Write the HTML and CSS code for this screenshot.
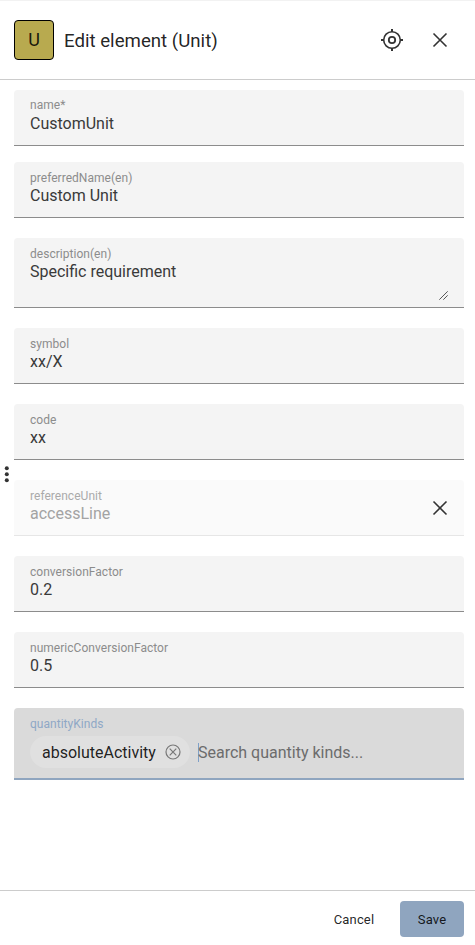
FILE: index.html
```html
<!DOCTYPE html>
<html lang="en">
<head>
<meta charset="utf-8">
<title>Edit element</title>
<link rel="stylesheet" href="styles.css">
</head>
<body>
<div class="panel">
  <header class="header">
    <div class="badge">U</div>
    <h1 class="title">Edit element (Unit)</h1>
    <button class="icon-button" aria-label="Locate">
      <svg width="24" height="24" viewBox="0 0 24 24" fill="none" stroke="currentColor"><circle cx="12" cy="12" r="8.3" stroke-width="1.6"/><circle cx="12" cy="12" r="3.2" stroke-width="1.8"/><path d="M12 1v3M12 20v3M1 12h3M20 12h3" stroke-width="2"/></svg>
    </button>
    <button class="icon-button" aria-label="Close">
      <svg width="24" height="24" viewBox="0 0 24 24" fill="none" stroke="currentColor" stroke-width="1.6"><path d="M5.5 5.5l13 13M18.5 5.5l-13 13"/></svg>
    </button>
  </header>
  <main class="form">
    <div class="field field-first"><span class="label">name*</span><span class="value">CustomUnit</span></div>
    <div class="field"><span class="label">preferredName(en)</span><span class="value">Custom Unit</span></div>
    <div class="field field-area"><span class="label">description(en)</span><span class="value">Specific requirement</span>
      <svg class="grip" width="9" height="9" viewBox="0 0 9 9" fill="none" stroke="currentColor" stroke-width=".9"><path d="M.3 8.7L8.7.3M4.3 8.7l4.4-4.4"/></svg>
    </div>
    <div class="field"><span class="label">symbol</span><span class="value">xx/X</span></div>
    <div class="field"><span class="label">code</span><span class="value">xx</span></div>
    <div class="field field-disabled">
      <div class="field-text"><span class="label">referenceUnit</span><span class="value">accessLine</span></div>
      <button class="icon-button" aria-label="Clear">
        <svg width="24" height="24" viewBox="0 0 24 24" fill="none" stroke="currentColor" stroke-width="1.6"><path d="M5.5 5.5l13 13M18.5 5.5l-13 13"/></svg>
      </button>
    </div>
    <div class="field"><span class="label">conversionFactor</span><span class="value">0.2</span></div>
    <div class="field"><span class="label">numericConversionFactor</span><span class="value">0.5</span></div>
    <div class="field field-focused"><span class="label">quantityKinds</span>
      <div class="chips">
        <span class="chip">absoluteActivity
          <svg width="18" height="18" viewBox="0 0 18 18" fill="none" stroke="currentColor" stroke-width="1.2"><circle cx="9" cy="9" r="7"/><path d="M5.7 5.7l6.6 6.6M12.3 5.7l-6.6 6.6"/></svg>
        </span>
        <span class="caret"></span>
        <span class="placeholder">Search quantity kinds...</span>
      </div>
    </div>
  </main>
  <footer class="footer">
    <button class="button">Cancel</button>
    <button class="button button-primary">Save</button>
  </footer>
  <div class="drag-handle">
    <svg width="6" height="17" viewBox="0 0 6 17" fill="currentColor"><circle cx="2.8" cy="2.3" r="2"/><circle cx="2.8" cy="8.3" r="2"/><circle cx="2.8" cy="14.3" r="2"/></svg>
  </div>
</div>
</body>
</html>
```

FILE: styles.css
```css
* { box-sizing: border-box; }
body {
  margin: 0;
  background: #fff;
  color: rgba(0, 0, 0, .87);
  font-family: Roboto, sans-serif;
}
button {
  border: 0;
  padding: 0;
  background: none;
  color: inherit;
  font: inherit;
}
svg { display: block; }
.panel {
  position: relative;
  display: flex;
  flex-direction: column;
  height: 945px;
}
.header {
  display: flex;
  align-items: center;
  height: 80px;
  padding: 0 11px 0 14px;
  border-top: 1px solid #f2f2f2;
  border-bottom: 1px solid #ccc;
}
.badge {
  display: flex;
  align-items: center;
  justify-content: center;
  width: 40px;
  height: 40px;
  padding-bottom: 1px;
  border: 1px solid #000;
  border-radius: 4px;
  background: #b8aa4f;
  font-size: 18px;
}
.title {
  flex: 1;
  margin: 1px 0 0 10px;
  font-size: 18.66px;
  font-weight: 400;
  line-height: 32px;
}
.icon-button {
  display: flex;
  align-items: center;
  justify-content: center;
  width: 48px;
  height: 48px;
  color: #333;
}
.form {
  display: flex;
  flex: 1;
  flex-direction: column;
  gap: 20px;
  padding: 10px 11px 0 14px;
}
.field {
  position: relative;
  height: 56px;
  padding: 6px 16px 0;
  border-bottom: 1px solid #8c8c8c;
  border-radius: 4px 4px 0 0;
  background: #f4f4f4;
}
.field-first { margin-bottom: -4px; }
.field-area { height: 70px; }
.label, .value { display: block; }
.label {
  height: 18px;
  color: #8c8c8c;
  font-size: 12px;
  letter-spacing: .03px;
  line-height: 20px;
}
.field-first .label { line-height: 18px; }
.value {
  color: #3a3a3a;
  font-size: 16px;
  line-height: 20px;
}
.grip {
  position: absolute;
  right: 16px;
  bottom: 7px;
  color: #444;
}
.field-disabled {
  display: flex;
  justify-content: space-between;
  padding-right: 0;
  border-bottom-color: #e6e6e6;
  background: #fafafa;
}
.field-disabled .label { color: #aaa; }
.field-disabled .value { color: #a3a3a3; }
.field-disabled .icon-button { margin-top: -2px; }
.field-focused {
  height: 72px;
  border-bottom: 2px solid #8fa5bf;
  background: #dadada;
}
.field-focused .label { color: #8fa8c6; }
.chips {
  display: flex;
  align-items: center;
  margin-top: 4px;
  font-size: 16px;
}
.chip {
  display: flex;
  align-items: center;
  justify-content: space-between;
  width: 160px;
  height: 32px;
  padding: 0 8px 0 12px;
  border-radius: 16px;
  background: #e0e0e0;
}
.chip svg { color: #777; }
.caret {
  width: 1px;
  height: 19px;
  margin-left: 8px;
  background: #7fa0c8;
}
.placeholder {
  margin-left: -1px;
  color: #6c6c6c;
}
.footer {
  display: flex;
  align-items: center;
  justify-content: flex-end;
  gap: 10px;
  height: 55px;
  padding: 2px 11px 0 0;
  border-top: 1px solid #ccc;
}
.button {
  width: 72px;
  height: 36px;
  border-radius: 4px;
  font-size: 13px;
  letter-spacing: .15px;
}
.button-primary {
  width: 64px;
  background: #8fa5bf;
}
.drag-handle {
  position: absolute;
  top: 466px;
  left: 4px;
  color: #333;
}
```
